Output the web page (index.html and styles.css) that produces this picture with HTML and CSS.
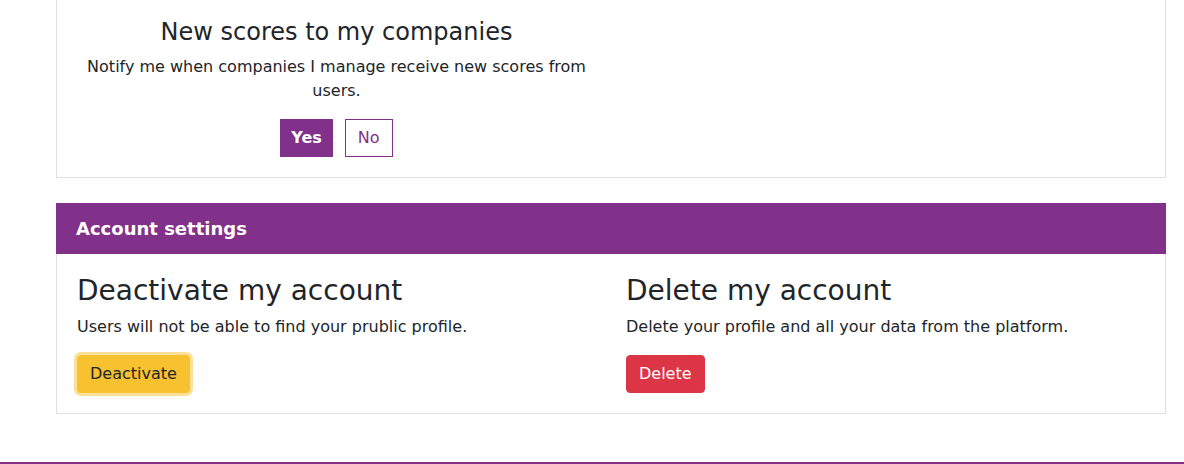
FILE: index.html
```html
<!doctype html>
<html>
  <head>
    <meta charset="UTF-8" />
    <title>Settings</title>
    <link rel="stylesheet" href="styles.css">
  </head>
  <body>
    <main class="page">
      <section class="card card-scrolled">
        <div class="card-body settings-grid">
          <div class="setting setting-center">
            <h4>New scores to my companies</h4>
            <p>Notify me when companies I manage receive new scores from users.</p>
            <div class="choice">
              <button class="btn btn-purple">Yes</button>
              <button class="btn btn-outline-purple">No</button>
            </div>
          </div>
          <div></div>
        </div>
      </section>

      <section class="card">
        <header class="card-header">Account settings</header>
        <div class="card-body settings-grid">
          <div class="setting">
            <h3>Deactivate my account</h3>
            <p>Users will not be able to find your prublic profile.</p>
            <button class="btn btn-warning is-focused">Deactivate</button>
          </div>
          <div class="setting">
            <h3>Delete my account</h3>
            <p>Delete your profile and all your data from the platform.</p>
            <button class="btn btn-danger">Delete</button>
          </div>
        </div>
      </section>
    </main>
    <footer class="footer"></footer>
  </body>
</html>
```

FILE: styles.css
```css
html,
body {
  margin: 0;
  background-color: #fff;
}
body {
  font-family: "DejaVu Sans", "Liberation Sans", sans-serif;
  font-size: 16px;
  line-height: 1.5;
  color: #212529;
  overflow: hidden;
}
.page {
  width: 1110px;
  margin: -3px 0 0 56px;
}
.card {
  border: 1px solid rgba(0, 0, 0, 0.125);
  background-color: #fff;
  margin-bottom: 25px;
}
.card-header {
  background-color: #82318a;
  color: #fff;
  font-size: 18px;
  font-weight: bold;
  line-height: 26px;
  padding: 13px 20px 12px;
  margin: -1px -1px 0;
}
.card-body {
  padding: 20px;
}
.settings-grid {
  display: grid;
  grid-template-columns: 1fr 1fr;
  column-gap: 30px;
}
.setting h3,
.setting h4 {
  font-weight: normal;
  line-height: 1.2;
  margin: 0 0 8px;
}
.setting h3 {
  font-size: 28px;
}
.setting h4 {
  font-size: 24px;
}
.setting p {
  margin: 0 0 16px;
}
.setting-center {
  text-align: center;
}
.choice {
  display: flex;
  justify-content: center;
  gap: 12px;
}
.btn {
  font-family: inherit;
  font-size: 16px;
  line-height: 24px;
  padding: 6px 12px;
  border: 1px solid transparent;
  border-radius: 4px;
  cursor: pointer;
}
.btn-purple {
  background-color: #82318a;
  border-color: #82318a;
  color: #fff;
  font-weight: bold;
  border-radius: 0;
  padding: 6px 10px;
}
.btn-outline-purple {
  background-color: #fff;
  border-color: #82318a;
  color: #82318a;
  border-radius: 0;
}
.btn-warning {
  background-color: #f7c12f;
  border-color: #f7c12f;
  color: #212529;
}
.btn-warning.is-focused {
  box-shadow: 0 0 0 3px rgba(247, 193, 47, 0.5);
}
.btn-danger {
  background-color: #dc3545;
  border-color: #dc3545;
  color: #fff;
}
.footer {
  margin-top: 48px;
  border-top: 3px solid #82318a;
  height: 40px;
}
```
